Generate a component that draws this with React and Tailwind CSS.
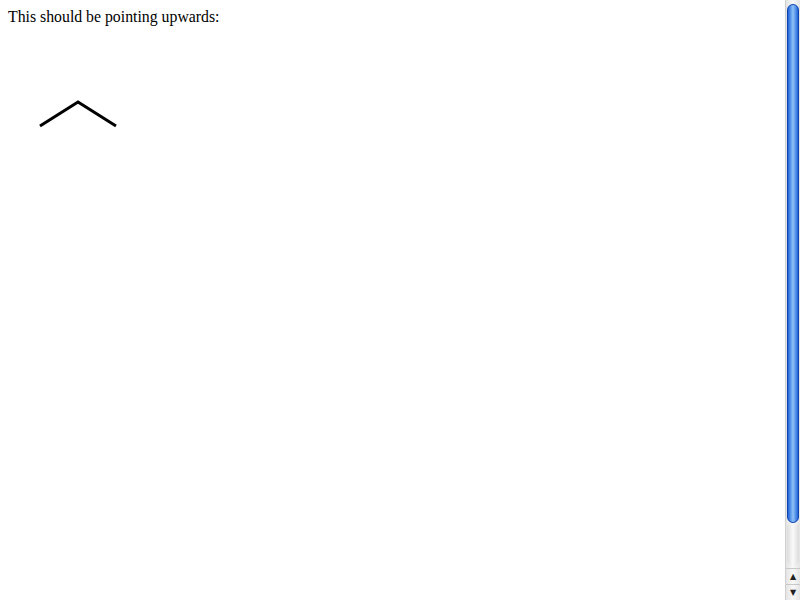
import React from 'react';

// Fake GTK-style scrollbar drawn over the right edge
const Scrollbar = () => (
  <div className="fixed top-0 right-0 h-[600px] w-[15px] flex flex-col bg-gradient-to-r from-[#e4e4e4] via-[#f8f8f8] to-[#e4e4e4] border-l border-[#d0d0d0]">
    <div className="flex-1 flex flex-col px-px pt-[4px] pb-[2px]">
      <div className="h-[519px] rounded-full border border-[#0f45b0] bg-gradient-to-r from-[#1f62d8] via-[#8fc2f6] to-[#1f62d8]"></div>
      <div className="flex-1 mt-[2px] rounded-b-full bg-gradient-to-r from-[#dcdcdc] via-[#fafafa] to-[#dcdcdc]"></div>
    </div>
    <div className="h-[16px] flex items-center justify-center border-t border-[#c8c8c8] text-[8px] leading-none text-[#222]" style={{ fontFamily: '"DejaVu Sans", sans-serif' }}>▲</div>
    <div className="h-[16px] flex items-center justify-center border-t border-[#c8c8c8] text-[8px] leading-none text-[#222]" style={{ fontFamily: '"DejaVu Sans", sans-serif' }}>▼</div>
  </div>
);

const App = () => {
  return (
    <div className="min-h-[600px] bg-white p-2 font-['Liberation_Serif',serif] text-black">
      <p className="text-[15.8px] leading-[18px]">This should be pointing upwards:</p>
      <svg width="130" height="110" className="block">
        <polyline points="32,100 70,76 108,100" fill="none" stroke="black" strokeWidth="3" />
      </svg>
      <Scrollbar />
    </div>
  );
};

export default App;
